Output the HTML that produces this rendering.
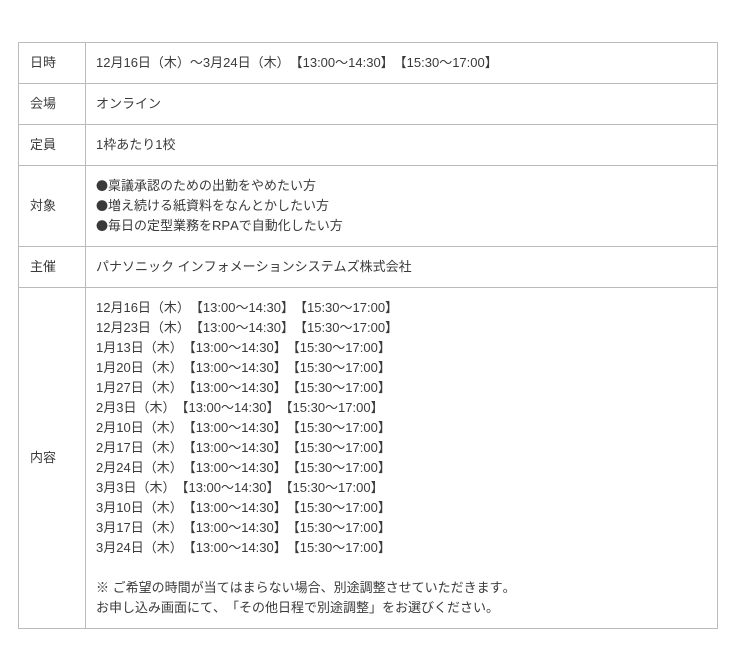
<!DOCTYPE html>
<html><head><meta charset="utf-8"><style>
body{margin:0;background:#fff;font-family:"Liberation Sans","Noto Sans CJK JP",sans-serif;font-size:13px;color:#3a3a3a;text-spacing-trim:space-all;font-kerning:none;}
table{position:absolute;left:18px;top:42px;width:700px;border-collapse:collapse;}
td{border:1px solid #bbb;padding:10px 10px 10px 10px;line-height:20px;height:20px;vertical-align:middle;}
td.h{width:45px;padding-left:11px;padding-right:10px;}
.b{font-family:"Noto Sans CJK JP",sans-serif;line-height:0;font-size:12px;}
</style></head><body>
<table>
<tr><td class="h">日時</td><td>12月16日（木）～3月24日（木）【13:00～14:30】【15:30～17:00】</td></tr>
<tr><td class="h">会場</td><td>オンライン</td></tr>
<tr><td class="h">定員</td><td>1枠あたり1校</td></tr>
<tr><td class="h">対象</td><td><span class="b">●</span>稟議承認のための出勤をやめたい方<br><span class="b">●</span>増え続ける紙資料をなんとかしたい方<br><span class="b">●</span>毎日の定型業務をRPAで自動化したい方</td></tr>
<tr><td class="h">主催</td><td>パナソニック インフォメーションシステムズ株式会社</td></tr>
<tr><td class="h">内容</td><td>12月16日（木）【13:00～14:30】【15:30～17:00】<br>12月23日（木）【13:00～14:30】【15:30～17:00】<br>1月13日（木）【13:00～14:30】【15:30～17:00】<br>1月20日（木）【13:00～14:30】【15:30～17:00】<br>1月27日（木）【13:00～14:30】【15:30～17:00】<br>2月3日（木）【13:00～14:30】【15:30～17:00】<br>2月10日（木）【13:00～14:30】【15:30～17:00】<br>2月17日（木）【13:00～14:30】【15:30～17:00】<br>2月24日（木）【13:00～14:30】【15:30～17:00】<br>3月3日（木）【13:00～14:30】【15:30～17:00】<br>3月10日（木）【13:00～14:30】【15:30～17:00】<br>3月17日（木）【13:00～14:30】【15:30～17:00】<br>3月24日（木）【13:00～14:30】【15:30～17:00】<br><br>※ ご希望の時間が当てはまらない場合、別途調整させていただきます。<br>お申し込み画面にて、「その他日程で別途調整」をお選びください。</td></tr>
</table>
</body></html>
